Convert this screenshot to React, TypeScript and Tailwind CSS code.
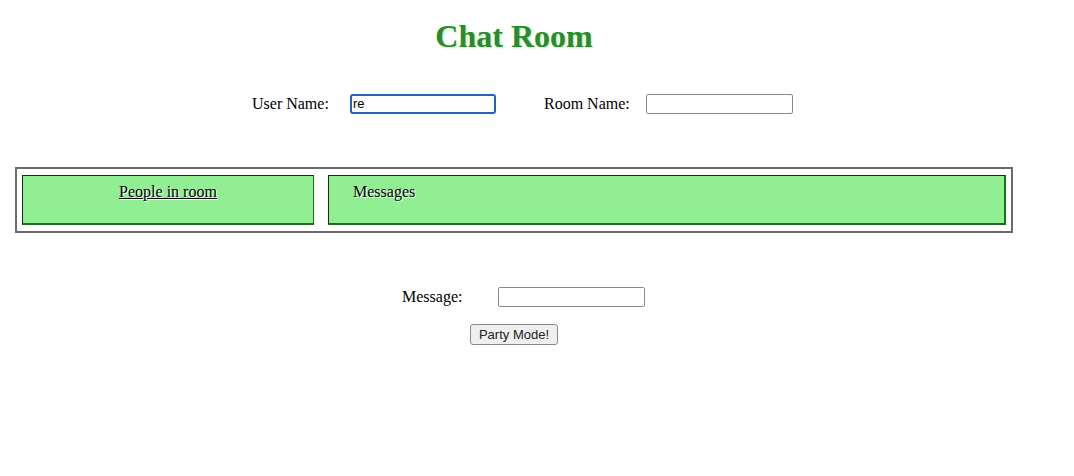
import * as React from "react";

const serif = "font-['Liberation_Serif','Times_New_Roman',serif]";

export default function App() {
  return (
    <div className={`w-[1074px] h-[476px] bg-white text-black ${serif} text-[16px] overflow-hidden`}>
      <div className="w-[1028px] pt-[18px] text-center">
        <h1 className="text-[32px] font-bold leading-[37px] text-[#2b8a2e] [text-shadow:1px_1px_2px_#a8f0a8]">
          Chat Room
        </h1>
      </div>

      {/* name row */}
      <div className="flex items-center mt-[38px] pl-[252px] h-[21px]">
        <span className="w-[98px]">User Name:</span>
        <input
          readOnly
          value="re"
          className="w-[146px] h-[20px] px-[1px] border-2 border-[#2563b8] rounded-[3px] text-[13px] font-['Liberation_Sans',Arial,sans-serif] outline-none"
        />
        <span className="ml-[48px] w-[102px]">Room Name:</span>
        <input
          readOnly
          className="w-[147px] h-[20px] border border-[#8a8a8a] rounded-[2px] text-[13px] outline-none"
        />
      </div>

      {/* panels */}
      <div className="mt-[53px] ml-[15px] w-[998px] h-[66px] border-2 border-[#6b6b6b] flex gap-[14px] px-[5px] pt-[6px]">
        <div className="w-[292px] h-[50px] bg-[#92ee92] border border-t-[#222] border-l-[#222] border-r-[#0b7a0b] border-b-2 border-b-[#0b7a0b] text-center pt-[4px]">
          <span className="underline [text-shadow:1px_1px_0_#fff]">People in room</span>
        </div>
        <div className="w-[678px] h-[50px] bg-[#92ee92] border border-t-[#222] border-l-[#222] border-r-2 border-r-[#0b7a0b] border-b-2 border-b-[#0b7a0b] pl-[24px] pt-[4px]">
          <span className="[text-shadow:1px_1px_0_#fff]">Messages</span>
        </div>
      </div>

      {/* message row */}
      <div className="flex items-center mt-[53px] pl-[402px] h-[21px]">
        <span className="w-[96px]">Message:</span>
        <input
          readOnly
          className="w-[147px] h-[20px] border border-[#8a8a8a] rounded-[2px] text-[13px] outline-none"
        />
      </div>
      <div className="mt-[15px] pl-[470px]">
        <button className="h-[21px] w-[88px] bg-[#efefef] border border-[#8a8a8a] rounded-[3px] text-[13px] text-[#222] font-['Liberation_Sans',Arial,sans-serif] leading-none">
          Party Mode!
        </button>
      </div>
    </div>
  );
}
